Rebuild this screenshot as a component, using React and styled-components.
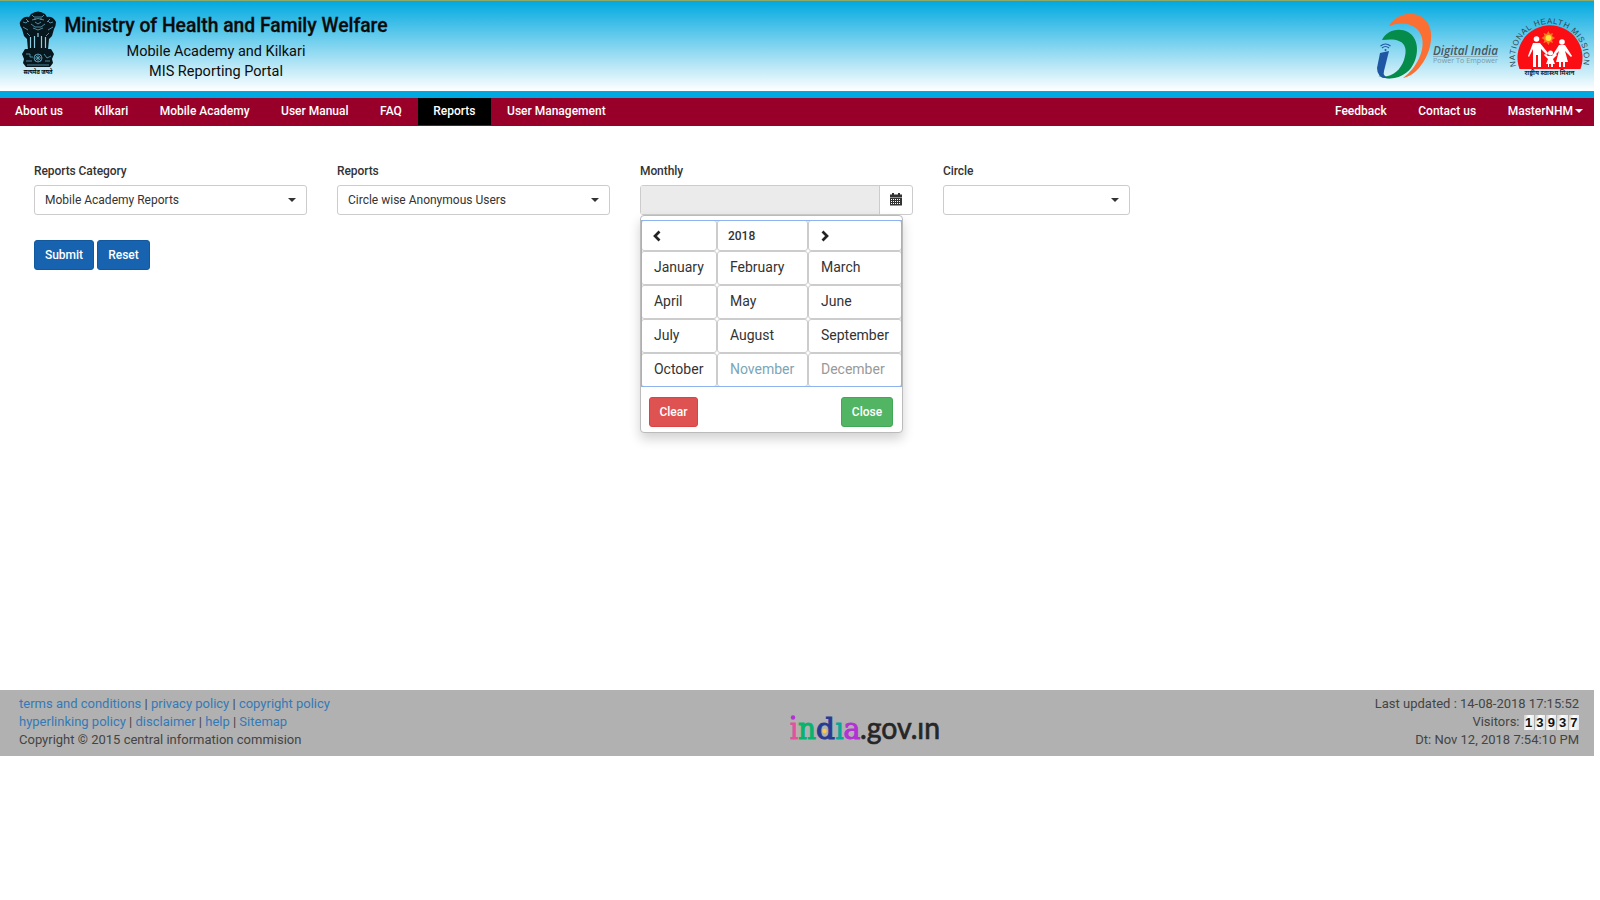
import React from "react";
import styled, { createGlobalStyle } from "styled-components";

const Global = createGlobalStyle`
  * { box-sizing: border-box; }
  body { margin: 0; background: #fff; color: #333; font: 12px/18px Roboto, "Noto Sans", sans-serif; }
`;
const Page = styled.div`width: 1594px;`;
const Header = styled.header`
  height: 98px; display: flex; justify-content: space-between;
  border-top: 1px solid #8faa68; border-bottom: 7px solid #00a9e0;
  background: linear-gradient(#00a9e0, #fff);
`;
const Brand = styled.div`display: flex; padding: 9px 0 0 18px;`;
const Titles = styled.div`
  width: 324px; margin-left: 6px; color: #0b0b0b; text-align: center; padding-top: 3px;
`;
const Title = styled.h1`
  margin: 0 0 3px; font-size: 19.3px; line-height: 26px; font-weight: 500; white-space: nowrap;
  -webkit-text-stroke: .3px #0b0b0b;
`;
const Subtitle = styled.div`font-size: 14.5px; line-height: 20px; padding-right: 20px;`;
const Nav = styled.nav`height: 28px; background: #990029; display: flex; justify-content: space-between;`;
const NavGroup = styled.div`display: flex;`;
const NavItem = styled.a`
  height: 27px; padding: 0 ${p => p.$right ?? 15.75}px 2px ${p => p.$left ?? 15.75}px; color: #fff; font-weight: 500;
  background: ${p => p.$active ? "#000" : "transparent"}; display: flex; align-items: center;
`;
const Caret = styled.span`border: 4px solid transparent; border-top-color: currentColor; border-bottom: 0; margin-left: ${p => p.$gap ?? 0}px;`;
const Filters = styled.section`display: flex; gap: 29.6px; padding: 36px 34px 0;`;
const Field = styled.div`width: ${p => p.$w}px; position: relative;`;
const Label = styled.div`font-weight: 500; margin-bottom: 5px; letter-spacing: -.08px;`;
const Select = styled.div`
  height: 30px; border: 1px solid #ccc; border-radius: 3px; display: flex; align-items: center;
  justify-content: space-between; padding: 0 10px;
`;
const DateGroup = styled.div`display: flex; height: 30px; border: 1px solid #ccc; border-radius: 3px;`;
const DateValue = styled.div`flex: 1; background: #ebebeb; border-right: 1px solid #ccc;`;
const DateButton = styled.div`width: 32px; display: grid; place-items: center; padding: 0 1px 2px 0;`;
const Popup = styled.div`
  position: absolute; top: 53px; left: 0; width: 263px; height: 218px; padding: 4px 0 0; background: #fff;
  border: 1px solid #bbb; border-radius: 4px; box-shadow: 0 6px 12px rgba(0,0,0,.18);
`;
const Months = styled.div`
  display: grid; grid-template-columns: 76px 91px 94px; grid-template-rows: 31px repeat(4, 34px);
  outline: 1px solid #8fb3ec; outline-offset: -1px; height: 167px; width: 261px;
`;
const Month = styled.div`
  border: 1px solid #ccc; border-radius: 3px; padding: 0 0 2px 12px; font-size: 14px; display: flex; align-items: center;
  color: ${p => p.$tone || "#333"};
`;
const MonthHead = styled(Month)`padding: 1px 0 0 10px; font-size: 12px; font-weight: 500;`;
const PopupActions = styled.div`display: flex; justify-content: space-between; padding: 10px 9px 0 8px;`;
const Actions = styled.div`display: flex; gap: 3px; padding: 25px 34px 0; height: 475px;`;
const Button = styled.button`
  height: 30px; width: ${p => p.$w}px; padding: 0; border: 1px solid ${p => p.$border}; background: ${p => p.$bg};
  color: #fff; border-radius: 3px; font: 500 12px/18px Roboto, sans-serif;
`;
const Footer = styled.footer`
  height: 66px; background: #b1b1b1; display: grid; grid-template-columns: 764px 170px 1fr; padding: 5px 15px 0 19px; font-size: 13px; color: #444;
`;
const FooterLink = styled.a`color: #337ab7;`;
const FooterRight = styled.div`text-align: right;`;
const Visitors = styled.div`display: flex; justify-content: flex-end; height: 18px;`;
const Counter = styled.span`display: flex; gap: 1px; margin: 2px 0 0 4px; height: 15px;`;
const Digit = styled.span`
  width: 10.3px; height: 15px; background: linear-gradient(100deg, #ccc, #fff 40%, #e2e2e2); color: #111;
  font: bold 13px/15px "Liberation Sans", sans-serif; text-align: center;
`;

function Emblem() {
  return (
    <svg width="40" height="70" viewBox="0 0 40 70">
      <g fill="#07171d">
        <path d="M13 4q7-5 14 0l2 3q6-1 9 5 0 4-2 7l-2 7-3 3-1 11H10L9 29 6 26 4 19Q1 15 2 12q3-6 9-5z" />
        <path d="M7 39h26l3 5-2 5 1 4-3 4H8l-3-4 1-4-2-5z" />
      </g>
      <g stroke="#5fa9c1" fill="none" strokeWidth=".8">
        <path d="M14 5l2 2h8l2-2M14 10q6-3 12 0M16 9h2m4 0h2M13 14l4 3h6l4-3M15 18l5 2 5-2M5 12l3 1 2-2M30 11l2 2 3-1M5 17l5 3M35 17l-5 3M9 23l3 3M31 23l-3 3M17 12l3 2 3-2M8 9l3 3M32 9l-3 3" />
        <circle cx="20" cy="48" r="4" /><path d="M20 44v8M16 48h8M17 45l6 6M23 45l-6 6M8 44h4v3h3M8 51h6M32 51h-5M26 44l3 4 4-2M9 55h22" />
      </g>
      <path d="M12.500 27v11M16.500 26v12M20 23v4M23.500 26v12M27.500 27v11" stroke="#8ecce0" strokeWidth="1.200" fill="none" />
      <text x="20" y="63.500" textAnchor="middle" textLength="29" lengthAdjust="spacingAndGlyphs" fontSize="6.500" fontWeight="bold">सत्यमेव जयते</text>
    </svg>
  );
}
function Logos() {
  return (
    <svg width="222" height="90" viewBox="1372 1 222 90">
      <path d="M1389 26C1396 15 1409 11 1420 16C1437 24 1433 52 1419 68Q1412 76 1403 78C1417 68 1425 50 1422 38C1419 25 1405 20 1389 26Z" fill="#fb6f32" />
      <path d="M1382 40C1386 31 1398 27 1408 32C1420 39 1419 57 1411 68C1403 78 1390 81 1378 76C1391 79 1400 71 1404 60C1409 45 1403 37 1382 40Z" fill="#058b4a" />
      <path d="M1380 53L1389 51L1384 71Q1382 77 1391 78Q1377 80 1377 68Z" fill="#2057a4" />
      <g fill="none" stroke="#2057a4" strokeWidth="1.2"><path d="M1380.500 46q5-4 10 0M1382 48q3.500-3 7 0" /></g><circle cx="1385.500" cy="50" r="1" fill="#2057a4" />
      <text x="1433" y="55" textLength="65" lengthAdjust="spacingAndGlyphs" fontFamily="Open Sans" fontStyle="italic" fontWeight="600" fontSize="12" fill="#4a565c">Digital India</text>
      <path d="M1433 56.500h65" stroke="#85969f" strokeWidth=".7" />
      <text x="1433" y="63" textLength="65" lengthAdjust="spacingAndGlyphs" fontFamily="Open Sans" fontSize="6.500" fill="#81999f">Power To Empower</text>
      <defs><path id="missionArc" d="M1516 66.500A34.500 34.500 0 1 1 1583 66.500" /></defs>
      <text fontFamily="Liberation Sans" fontSize="8" fill="#304852"><textPath href="#missionArc" textLength="123">NATIONAL HEALTH MISSION</textPath></text>
      <path d="M1519.500 69A32.500 32.500 0 1 1 1580.500 69Z" fill="#fb0d14" />
      <path d="M1548.500 31l1.500 3 3-1-1 3 3 2-3 2 1 3-3-1-1.500 3-2-3-3 1 1-3-3-2 3-2-1-3 3 1z" fill="#ff7820" /><circle cx="1548.500" cy="38" r="3" fill="#ffe33c" />
      <g fill="#fff"><circle cx="1536.500" cy="39" r="2.800" /><circle cx="1562" cy="42" r="2.800" /><circle cx="1550.500" cy="53" r="2.500" />
        <path d="M1533 43h7l8 10-1 2-6-6v18h-3V55h-2v12h-3V49l-4 8-1-1zM1559 45h6l7 11-1 1-6-6 3 11h-3v5h-2v-5h-2v5h-2v-5h-3l3-11-6 6-1-1zM1548 56h5l3-2 1 1-4 4 2 5h-2v3h-2v-3h-2v3h-1v-3h-2l2-5-4-4 1-1z" />
      </g>
      <text x="1549.500" y="74.500" textAnchor="middle" textLength="50" lengthAdjust="spacingAndGlyphs" fontSize="5.500" fontWeight="bold" fill="#222">राष्ट्रीय स्वास्थ्य मिशन</text>
    </svg>
  );
}
const CalendarIcon = () => <svg width="12" height="13" viewBox="0 0 12 13"><path fill="#333" d="M0 1.500h2V0h2v1.500h4V0h2v1.500h2V4H0zM0 4.500h12V12.500H0z" /><path d="M1 6.500h10M1 8.500h10M1 10.500h10" stroke="#fff" strokeDasharray="1 1" /></svg>;
const Chevron = ({ right }) => <svg width="10" height="12" viewBox="0 0 10 12"><path d={right ? "M3.500 1.500L8 6L3.500 10.500" : "M7.500 1.500L3 6L7.500 10.500"} fill="none" stroke="#222" strokeWidth="2.700" /></svg>;

const indiaLetters = [
  { ch: "ı", x: 790, w: 8, fill: "#e6509d" },
  { ch: "n", x: 798, w: 18, fill: "#08b46b" },
  { ch: "d", x: 816, w: 19, fill: "#293b91" },
  { ch: "ı", x: 835.5, w: 8, fill: "#06a997" },
  { ch: "a", x: 843.5, w: 17, fill: "#b431d5" },
];
const Portal = () => (
  <svg width="160" height="58" viewBox="783 695 160 58">
    <g fontFamily="DejaVu Serif" fontSize="29">
      {indiaLetters.map(l => (
        <text key={l.x} x={l.x} y="738.5" textLength={l.w} lengthAdjust="spacingAndGlyphs" fill={l.fill} stroke={l.fill} strokeWidth="1.1">{l.ch}</text>
      ))}
    </g>
    <circle cx="793" cy="717.500" r="2.200" fill="#b431d5" /><circle cx="824.500" cy="731" r="2.200" fill="#ffc83d" />
    <text x="860" y="738.500" textLength="80" lengthAdjust="spacingAndGlyphs" fontFamily="Lato" fontSize="30" fill="#262626" stroke="#262626" strokeWidth=".7">.gov.ın</text>
  </svg>
);

const months = ["January", "February", "March", "April", "May", "June", "July", "August", "September", "October", "November", "December"];

export default function App() {
  return (
    <Page>
      <Global />
      <Header>
        <Brand><Emblem /><Titles><Title>Ministry of Health and Family Welfare</Title><Subtitle>Mobile Academy and Kilkari</Subtitle><Subtitle>MIS Reporting Portal</Subtitle></Titles></Brand>
        <Logos />
      </Header>
      <Nav>
        <NavGroup><NavItem $left={15}>About us</NavItem><NavItem>Kilkari</NavItem><NavItem>Mobile Academy</NavItem><NavItem>User Manual</NavItem><NavItem>FAQ</NavItem><NavItem $active>Reports</NavItem><NavItem>User Management</NavItem></NavGroup>
        <NavGroup><NavItem>Feedback</NavItem><NavItem>Contact us</NavItem><NavItem $right={11}>MasterNHM<Caret $gap={2} /></NavItem></NavGroup>
      </Nav>
      <Filters>
        <Field $w={273.4}><Label>Reports Category</Label><Select>Mobile Academy Reports<Caret /></Select></Field>
        <Field $w={273.4}><Label>Reports</Label><Select>Circle wise Anonymous Users<Caret /></Select></Field>
        <Field $w={273.4}>
          <Label>Monthly</Label><DateGroup><DateValue /><DateButton><CalendarIcon /></DateButton></DateGroup>
          <Popup>
            <Months>
              <MonthHead><Chevron /></MonthHead><MonthHead>2018</MonthHead><MonthHead><Chevron right /></MonthHead>
              {months.map((m, i) => <Month key={m} $tone={i === 10 ? "#7ba5b8" : i === 11 ? "#999" : undefined}>{m}</Month>)}
            </Months>
            <PopupActions><Button $w={49} $bg="#df5252" $border="#d94343">Clear</Button><Button $w={52} $bg="#51b563" $border="#41a855">Close</Button></PopupActions>
          </Popup>
        </Field>
        <Field $w={187}><Label>Circle</Label><Select><span /><Caret /></Select></Field>
      </Filters>
      <Actions><Button $w={60} $bg="#1763af" $border="#11589f">Submit</Button><Button $w={53} $bg="#1763af" $border="#11589f">Reset</Button></Actions>
      <Footer>
        <div>
          <div><FooterLink>terms and conditions</FooterLink> | <FooterLink>privacy policy</FooterLink> | <FooterLink>copyright policy</FooterLink></div>
          <div><FooterLink>hyperlinking policy</FooterLink> | <FooterLink>disclaimer</FooterLink> | <FooterLink>help</FooterLink> | <FooterLink>Sitemap</FooterLink></div>
          <div>Copyright © 2015 central information commision</div>
        </div>
        <Portal />
        <FooterRight><div>Last updated : 14-08-2018 17:15:52</div><Visitors>Visitors: <Counter>{[..."13937"].map((d, i) => <Digit key={i}>{d}</Digit>)}</Counter></Visitors><div>Dt: Nov 12, 2018 7:54:10 PM</div></FooterRight>
      </Footer>
    </Page>
  );
}
